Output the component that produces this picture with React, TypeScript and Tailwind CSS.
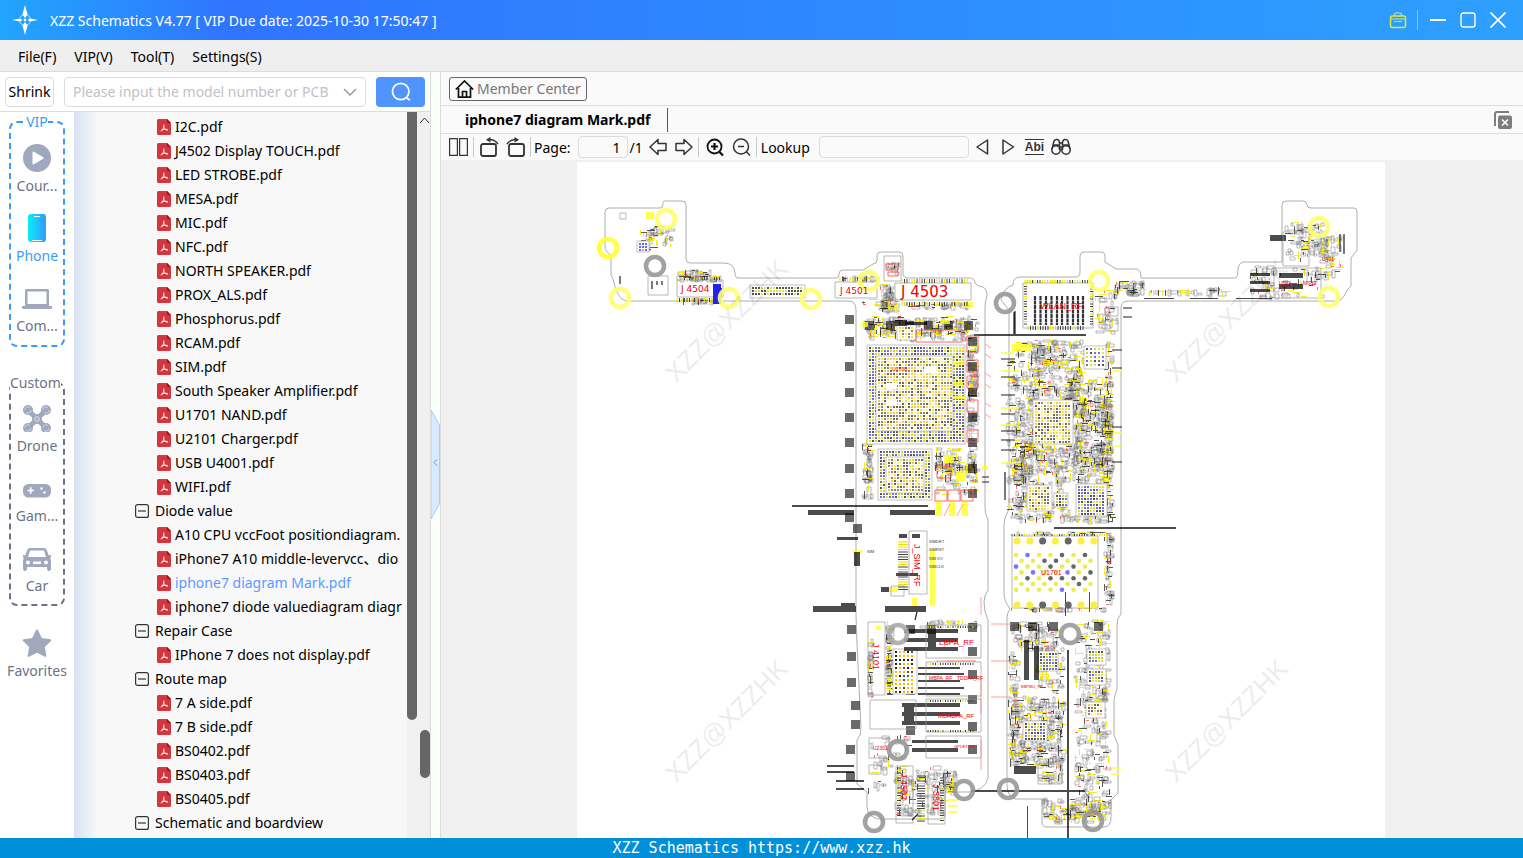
import type { ReactNode } from "react";

const files = [
  "I2C.pdf",
  "J4502 Display TOUCH.pdf",
  "LED STROBE.pdf",
  "MESA.pdf",
  "MIC.pdf",
  "NFC.pdf",
  "NORTH SPEAKER.pdf",
  "PROX_ALS.pdf",
  "Phosphorus.pdf",
  "RCAM.pdf",
  "SIM.pdf",
  "South Speaker Amplifier.pdf",
  "U1701 NAND.pdf",
  "U2101 Charger.pdf",
  "USB U4001.pdf",
  "WIFI.pdf",
];

const folders = [
  {
    name: "Diode value",
    files: [
      "A10 CPU vccFoot positiondiagram.",
      "iPhone7 A10 middle-levervcc、dio",
      "iphone7 diagram Mark.pdf",
      "iphone7 diode valuediagram diagr",
    ],
  },
  { name: "Repair Case", files: ["IPhone 7 does not display.pdf"] },
  { name: "Route map", files: ["7 A side.pdf", "7 B side.pdf", "BS0402.pdf", "BS0403.pdf", "BS0405.pdf"] },
  { name: "Schematic and boardview", files: [] },
];

const selected = "iphone7 diagram Mark.pdf";

function TitleBar() {
  return (
    <header className="flex h-10 shrink-0 items-center bg-linear-to-r from-[#22a5fd] via-[#3074fe] via-15% to-[#2da0ff] pl-3 pr-4 text-white">
      <svg width="26" height="30" viewBox="0 0 26 30">
        <circle cx="13" cy="15" r="5.5" fill="none" stroke="#fff" strokeWidth="1" strokeDasharray="5 3.6" strokeDashoffset="-1.8" opacity=".7" />
        <path d="M13 0l2.600 9.500L13 13l-2.600-3.500zM13 30l2.600-9.500L13 17l-2.600 3.500zM0 15l8-1.500 2.500 1.500L8 16.500zM26 15l-8-1.500-2.500 1.500 2.500 1.500z" fill="#fff" />
        <circle cx="13" cy="15" r="1.400" fill="#fff" />
      </svg>
      <h1 className="ml-3 flex-1">XZZ Schematics V4.77 [ VIP Due date: 2025-10-30 17:50:47 ]</h1>
      <button aria-label="Toolbox">
        <svg width="18" height="18" viewBox="0 0 18 18" fill="none" stroke="#e3e34a" strokeWidth="1.5">
          <rect x="1.5" y="5" width="15" height="11.5" rx="2" />
          <path d="M5.5 5V3.500a1.500 1.500 0 0 1 1.500-1.500h4a1.500 1.500 0 0 1 1.500 1.500V5M1.500 8h15M5 10.500h8" strokeWidth="1.2" />
        </svg>
      </button>
      <span className="ml-2.5 mr-3 h-5 w-px bg-white/40" />
      <button aria-label="Minimize" className="mr-3.5">
        <svg width="16" height="16" viewBox="0 0 16 16" stroke="#fff" strokeWidth="2"><path d="M0 8h16" /></svg>
      </button>
      <button aria-label="Maximize" className="mr-3.5">
        <svg width="16" height="16" viewBox="0 0 16 16" fill="none" stroke="#fff" strokeWidth="1.4"><rect x="1" y="1" width="14" height="14" rx="2.5" /></svg>
      </button>
      <button aria-label="Close" className="mr-px">
        <svg width="16" height="16" viewBox="0 0 16 16" stroke="#fff" strokeWidth="1.7"><path d="M.5.5l15 15M15.5.5l-15 15" /></svg>
      </button>
    </header>
  );
}

function MenuBar() {
  return (
    <nav className="flex h-8 shrink-0 items-center gap-[18px] border-b border-[#dcdcdc] bg-[#efefef] pl-[18px] pt-px">
      <button>File(F)</button>
      <button>VIP(V)</button>
      <button>Tool(T)</button>
      <button>Settings(S)</button>
    </nav>
  );
}

function SearchRow() {
  return (
    <div className="flex h-10 shrink-0 items-center border-b border-[#dcdcdc] px-[5px]">
      <button className="h-[30px] w-[49px] rounded border border-[#dcdcdc]">Shrink</button>
      <div className="ml-2.5 flex h-[30px] flex-1 items-center rounded border border-[#dcdcdc] px-2">
        <input aria-label="Model number" placeholder="Please input the model number or PCB" className="w-0 flex-1 outline-none placeholder:text-[#bfc2c8]" />
        <button aria-label="Show list" className="ml-2">
          <svg width="14" height="14" viewBox="0 0 14 14" fill="none" stroke="#9a9a9a" strokeWidth="1.5"><path d="M1 4l6 6 6-6" /></svg>
        </button>
      </div>
      <button aria-label="Search" className="ml-2.5 flex h-[30px] w-[49px] items-center justify-center rounded-sm bg-[#5094ff]">
        <svg width="20" height="20" viewBox="0 0 20 20" fill="none" stroke="#fff" strokeWidth="1.7"><circle cx="9.7" cy="9.5" r="8.2" /><path d="M15.5 15.3l3.300 3" /></svg>
      </button>
    </div>
  );
}

function SideItem({ label, active, children }: { label: string; active?: boolean; children: ReactNode }) {
  return (
    <button className={`flex h-[70px] w-full flex-col items-center pt-2.5 leading-5 ${active ? "text-[#3b9bfb]" : "text-[#6b7285]"}`}>
      <svg width="32" height="28" viewBox="0 0 32 28" fill="#9fa8bd">{children}</svg>
      <span className="mt-1">{label}</span>
    </button>
  );
}

function SideBar() {
  return (
    <aside className="w-[74px] shrink-0 bg-white">
      <fieldset className="mx-[9px] rounded-lg border-2 border-dashed border-[#3b9bfb] pb-px pt-0.5">
        <legend className="mx-auto leading-5 text-[#3b9bfb]">VIP</legend>
        <SideItem label="Cour...">
          <circle cx="16" cy="14" r="14" />
          <path d="M11.500 8.500q0-1.500 1.400-.8l9.300 5.500q1 .8 0 1.600l-9.300 5.500q-1.400.7-1.400-.8z" fill="#fff" />
        </SideItem>
        <SideItem label="Phone" active>
          <defs>
            <linearGradient id="phone">
              <stop offset="0" stopColor="#06eefb" />
              <stop offset="1" stopColor="#3599fd" />
            </linearGradient>
          </defs>
          <rect x="7" y="0" width="18" height="28" rx="3" fill="url(#phone)" />
          <path d="M13 2.500h6M11 26.500h10" stroke="#fff" />
        </SideItem>
        <SideItem label="Com...">
          <path d="M5.500 5h21a1.500 1.500 0 0 1 1.500 1.500V22H4V6.500A1.500 1.500 0 0 1 5.500 5zM6.500 7.500V20h19V7.500z" fillRule="evenodd" />
          <path d="M1 22h30v1.500q0 1.500-1.500 1.500h-27Q1 25 1 23.500z" />
        </SideItem>
      </fieldset>
      <fieldset className="mx-[9px] mt-[26px] rounded-lg border-2 border-dashed border-[#6b7285] pt-px">
        <legend className="-mx-px leading-5 text-[#6b7285]">Custom</legend>
        <SideItem label="Drone">
          <path d="M7 6l18 18M25 6L7 24" stroke="#9fa8bd" strokeWidth="5" />
          <circle cx="16" cy="15" r="5" />
          <circle cx="16" cy="15" r="2.300" fill="none" stroke="#e3e6ee" />
          {[7, 25].map((cx) =>
            [6, 24].map((cy) => (
              <g key={`${cx}-${cy}`}>
                <circle cx={cx} cy={cy} r="5" />
                <circle cx={cx} cy={cy} r="3.200" fill="none" stroke="#e3e6ee" strokeWidth=".7" strokeDasharray="7 3" />
              </g>
            )),
          )}
        </SideItem>
        <SideItem label="Gam...">
          <rect x="2" y="10" width="28" height="13.5" rx="5.500" />
          <path d="M6.500 16.500h6.500M9.700 13.300v6.500" stroke="#fff" strokeWidth="1.700" />
          <circle cx="20.500" cy="14.500" r="1.200" fill="#fff" />
          <circle cx="23.500" cy="18.500" r="1.200" fill="#fff" />
        </SideItem>
        <SideItem label="Car">
          <path d="M9 4h14q2 0 2.800 2l2 5.500 2.200-.5v2.500l-1 .5q1 1.200 1 3V25q0 2-2 2t-2-2v-2H6v2q0 2-2 2t-2-2v-8q0-1.800 1-3l-1-.5V11l2.200.5L6.200 6Q7 4 9 4zm0 2.500L7 13h18l-2-6.500zM7 16.500a2 2 0 1 0 0 4 2 2 0 0 0 0-4zm18 0a2 2 0 1 0 0 4 2 2 0 0 0 0-4zM12 17.500V20h8v-2.500z" fillRule="evenodd" />
        </SideItem>
      </fieldset>
      <div className="mt-[13px]">
        <SideItem label="Favorites">
          <path d="M16 1.500l4.200 8.500 9 1.300-6.500 6.500 1.700 9L16 22.500l-8.400 4.300 1.700-9-6.500-6.500 9-1.300z" stroke="#9fa8bd" strokeLinejoin="round" strokeWidth="2" />
        </SideItem>
      </div>
    </aside>
  );
}

function PdfRow({ name }: { name: string }) {
  return (
    <li className="h-6">
      <a href="#" className={`flex items-center gap-1 pl-[83px] leading-6 whitespace-nowrap ${name === selected ? "text-[#5b9aff]" : ""}`}>
        <svg width="14" height="16" viewBox="0 0 14 16" className="shrink-0">
          <path d="M1.500 0H10l4 4v10.500q0 1.500-1.500 1.500h-11Q0 16 0 14.500v-13Q0 0 1.500 0z" fill="#d2373f" />
          <path d="M10 0l4 4h-3q-1 0-1-1z" fill="#8e1620" />
          <path d="M6.800 5.500c.6 2-.6 5-3 6.800M7 8.500c.8 1.800 2 2.600 4 2.500M4 11.500c2-1.200 4-1.500 6.500-1" fill="none" stroke="#fff" strokeWidth=".9" />
        </svg>
        {name}
      </a>
    </li>
  );
}

function Tree() {
  return (
    <div className="flex w-0 flex-1">
      <div className="flex-1 overflow-hidden bg-linear-to-r from-[#d9e2f2] to-[#f8f8f8] to-[24px] pt-[3px]">
        <ul>
          {files.map((name) => (
            <PdfRow key={name} name={name} />
          ))}
          {folders.map((folder) => (
            <li key={folder.name}>
              <button className="flex h-6 items-center gap-1.5 pl-[61px] leading-6">
                <svg width="14" height="14" viewBox="0 0 14 14" fill="none" stroke="#333" strokeWidth="1.2">
                  <rect x=".6" y=".6" width="12.8" height="12.8" rx="2" />
                  <path d="M3 7h8" />
                </svg>
                {folder.name}
              </button>
              <ul>
                {folder.files.map((name) => (
                  <PdfRow key={name} name={name} />
                ))}
              </ul>
            </li>
          ))}
        </ul>
      </div>
      <div className="w-2.5 bg-[#f0f0f0] pb-[118px]">
        <div className="h-full rounded-b-full bg-[#666]" />
      </div>
      <div className="flex w-[13px] flex-col items-end bg-[#f0f0f0] pb-[60px]">
        <svg width="11" height="16" viewBox="0 0 11 16" fill="none" stroke="#333"><path d="M1 11l4.500-5 4.500 5" /></svg>
        <div className="mt-auto h-12 w-2.5 rounded-full bg-[#666]" />
      </div>
    </div>
  );
}

function Tool({ label, width, children }: { label: string; width: number; children: ReactNode }) {
  return (
    <button aria-label={label}>
      <svg width={width} height="20" viewBox={`0 0 ${width} 20`} fill="none" stroke="#333" strokeWidth="1.5" strokeLinejoin="round">
        {children}
      </svg>
    </button>
  );
}

function Divider() {
  return <span className="mx-[5px] h-5 w-px shrink-0 bg-[#c8c8c8]" />;
}

function ToolBar() {
  return (
    <div className="flex h-[26px] shrink-0 items-center bg-[#fafafa] pl-2">
      <Tool label="Two pages" width={19}>
        <path d="M.6 1.600h7.800v16.800H.6zM10.600 1.600h7.800v16.800h-7.800z" strokeWidth="1.2" />
      </Tool>
      <Divider />
      <Tool label="Rotate left" width={20}>
        <rect x="2" y="7" width="15" height="12" rx="2" strokeWidth="1.8" />
        <path d="M8 2.800q7-1.200 11 4.200" />
        <path d="M11.500 0v5.600L7 2.800z" fill="#333" stroke="none" />
      </Tool>
      <span className="w-[7px]" />
      <Tool label="Rotate right" width={19}>
        <rect x="3" y="7" width="15" height="12" rx="2" strokeWidth="1.8" />
        <path d="M12 2.800Q5 1.600 1 7" />
        <path d="M8.500 0v5.600L13 2.800z" fill="#333" stroke="none" />
      </Tool>
      <Divider />
      <label htmlFor="page" className="-ml-0.5">Page:</label>
      <input id="page" defaultValue="1" className="ml-[7px] h-[22px] w-[50px] rounded-sm border border-[#dcdcdc] pr-1.5 text-right outline-none" />
      <span className="ml-0.5 mr-1.5">/1</span>
      <Tool label="Previous page" width={18}>
        <path d="M1 10l8-7.500v4h8v7H9v4z" />
      </Tool>
      <span className="w-2" />
      <Tool label="Next page" width={18}>
        <path d="M17 10L9 2.500v4H1v7h8v4z" />
      </Tool>
      <Divider />
      <span className="w-0.5" />
      <Tool label="Zoom in" width={18}>
        <circle cx="8.500" cy="9.500" r="7" stroke="#111" strokeWidth="1.8" />
        <path d="M13.500 15l3.500 3.500M5 9.500h7M8.500 6v7" stroke="#111" strokeWidth="2.2" />
      </Tool>
      <span className="w-2" />
      <Tool label="Zoom out" width={19}>
        <circle cx="9" cy="9.500" r="7.500" />
        <path d="M14.500 15l3.500 3.500M6 9.500h6" />
      </Tool>
      <Divider />
      <label htmlFor="lookup" className="-ml-px">Lookup</label>
      <input id="lookup" className="ml-[9px] h-[22px] w-[150px] rounded-sm border border-[#dcdcdc] outline-none" />
      <span className="w-1.5" />
      <Tool label="Find previous" width={14}>
        <path d="M12.500 3v14L2 10z" />
      </Tool>
      <span className="w-3" />
      <Tool label="Find next" width={14}>
        <path d="M2 3v14l10.500-7z" />
      </Tool>
      <button aria-label="Whole word" className="ml-2.5 h-4 border-y border-[#333] font-['Liberation_Sans'] text-[12px] font-bold leading-3 text-[#333]">Abi</button>
      <span className="w-[7px]" />
      <Tool label="Find in file" width={20}>
        <circle cx="5" cy="13" r="4.200" />
        <circle cx="15" cy="13" r="4.200" />
        <path d="M1 12L3 4q1-2 3.500-1.500Q8 3 8.500 5v8M19 12l-2-8q-1-2-3.500-1.500Q12 3 11.500 5v8M8.500 6h3M8.500 10h3M2 8h6M12 8h6" />
      </Tool>
    </div>
  );
}

// small seeded generator so the board looks the same on every load
function makeRandom(seed: number) {
  let s = seed;
  return () => {
    s = (s * 1664525 + 1013904223) % 4294967296;
    return s / 4294967296;
  };
}

type Area = { x: number; y: number; w: number; h: number; seed?: number };

// ball grid of a chip
function Balls({ x, y, w, h, step, colors, seed = 1 }: Area & { step: number; colors: string[] }) {
  const random = makeRandom(seed);
  const paths: Record<string, string> = {};
  for (let py = y + 1; py < y + h - 1; py += step) {
    for (let px = x + 1; px < x + w - 1; px += step) {
      const color = colors[Math.floor(random() * colors.length)];
      paths[color] = (paths[color] ?? "") + `M${px} ${py}h2v2h-2z`;
    }
  }
  return (
    <g>
      <rect x={x - 1} y={y - 1} width={w + 2} height={h + 2} fill="#fff" stroke="#aaa" strokeWidth=".7" />
      {Object.entries(paths).map(([color, d]) => (
        <path key={color} d={d} fill={color} />
      ))}
    </g>
  );
}

// area packed with small resistors, capacitors and net names
function Parts({ x, y, w, h, n, seed = 1 }: Area & { n: number }) {
  const random = makeRandom(seed * 7919);
  let outline = "";
  let yellow = "";
  let black = "";
  let red = "";
  for (let i = 0; i < n; i++) {
    const flat = random() > 0.45;
    const a = 3 + Math.floor(random() * 6);
    const b = 2 + Math.floor(random() * 3);
    const pw = Math.min(flat ? a : b, w);
    const ph = Math.min(flat ? b : a, h);
    const px = Math.round(x + random() * (w - pw));
    const py = Math.round(y + random() * (h - ph));
    const kind = random();
    const box = `M${px} ${py}h${pw}v${ph}h${-pw}z`;
    if (kind < 0.5) outline += box;
    else if (kind < 0.78) yellow += `M${px} ${py}h${flat ? pw + 1 : 1}v${flat ? 1 : ph}h${flat ? -pw - 1 : -1}z`;
    else if (kind < 0.94) black += `M${px} ${py}h${flat ? pw : 1}v${flat ? 1 : ph}h${flat ? -pw : -1}z`;
    else red += `M${px} ${py}h${flat ? 3 : 1}v${flat ? 1 : 3}h${flat ? -3 : -1}z`;
  }
  return (
    <g>
      <path d={outline} fill="none" stroke="#555" strokeWidth=".5" opacity=".8" />
      <path d={yellow} fill="#f6e600" opacity=".85" />
      <path d={black} fill="#222" opacity=".75" />
      <path d={red} fill="#f33" opacity=".7" />
    </g>
  );
}

// row of pins beside a connector
function Pins({ x, y, w, h, seed = 1 }: Area) {
  const random = makeRandom(seed * 31);
  const across = w > h;
  let dark = "";
  let yellow = "";
  for (let p = 0; p < (across ? w : h); p += 2.5) {
    const d = across ? `M${x + p} ${y}v${h}` : `M${x} ${y + p}h${w}`;
    if (random() > 0.4) dark += d;
    else yellow += d;
  }
  return (
    <g>
      <path d={dark} stroke="#444" />
      <path d={yellow} stroke="#e8e000" />
    </g>
  );
}

// x, y, width, height, number of parts
const parts = [
  [640, 228, 18, 24, 24], [648, 226, 28, 22, 26], [676, 270, 36, 10, 34], [676, 276, 48, 6, 20], [678, 298, 46, 7, 20],
  [840, 276, 38, 6, 20], [862, 298, 40, 14, 30], [880, 284, 14, 30, 36], [904, 302, 66, 8, 30], [864, 316, 115, 20, 150],
  [866, 328, 100, 14, 60], [967, 334, 12, 150, 100], [862, 440, 12, 60, 50], [934, 446, 30, 30, 60], [936, 460, 44, 36, 60],
  [868, 622, 5, 76, 30], [886, 620, 8, 78, 60], [912, 620, 66, 8, 20], [868, 735, 44, 60, 50], [894, 765, 56, 52, 100],
  [943, 770, 14, 26, 40], [886, 262, 14, 14, 12], [1094, 290, 24, 44, 46], [1114, 280, 32, 16, 50], [1144, 290, 60, 6, 24],
  [1206, 286, 24, 12, 14], [1250, 266, 30, 34, 40], [1284, 222, 44, 40, 90], [1280, 266, 44, 34, 40], [1318, 236, 28, 46, 50],
  [1014, 340, 26, 170, 180], [1030, 340, 56, 60, 220], [1064, 376, 50, 60, 180], [1028, 400, 16, 50, 40], [1073, 400, 40, 70, 140],
  [1010, 440, 104, 44, 300], [1010, 480, 60, 40, 90], [1008, 514, 108, 10, 60], [1104, 340, 10, 180, 110], [1010, 532, 100, 3, 24],
  [1104, 532, 10, 76, 60], [1010, 608, 100, 4, 34], [1010, 622, 50, 30, 80], [1036, 646, 30, 50, 60], [1008, 650, 12, 120, 60],
  [1010, 696, 56, 72, 300], [1074, 620, 38, 190, 300], [1042, 798, 68, 26, 120], [1038, 764, 26, 20, 30], [1006, 352, 14, 160, 50],
];

const rings = [
  [608, 248, "#ffff30"], [666, 219, "#ffff70"], [620, 298, "#ffff70"], [729, 298, "#ffff70"], [811, 299, "#ffff70"],
  [869, 281, "#ffff70"], [655, 266, "#999999"], [1005, 303, "#999999"], [1099, 281, "#ffff70"], [1319, 227, "#ffff70"],
  [1329, 297, "#ffff70"], [898, 634, "#aaaaaa"], [1070, 634, "#999999"], [898, 750, "#999999"], [964, 790, "#999999"],
  [1008, 789, "#999999"], [874, 822, "#999999"], [1093, 821, "#999999"],
] as const;

const squares = [
  [849, 319], [849, 341], [849, 366], [849, 392], [849, 417], [849, 442], [849, 468], [849, 493], [849, 517], [857, 528],
  [851, 629], [851, 656], [851, 682], [855, 705], [855, 724], [850, 749], [850, 776],
  [972, 341], [972, 366], [972, 392], [972, 417], [972, 442], [972, 468], [972, 493], [869, 325], [890, 325], [909, 325],
  [928, 325], [948, 325], [968, 325], [910, 629], [931, 629], [972, 627], [972, 651], [972, 674], [972, 699], [972, 726], [972, 749],
  [1014, 626], [1032, 626], [1053, 626], [1098, 626], [910, 663], [910, 690], [910, 730],
];

// dark net bars: x, y, width, height
const bars = [
  [792, 505, 136, 2], [808, 510, 46, 5], [890, 510, 45, 5], [813, 606, 43, 6], [885, 606, 41, 6], [841, 603, 14, 6],
  [974, 334, 112, 2], [1054, 527, 122, 2], [971, 790, 114, 2], [1067, 650, 2, 188], [1027, 806, 1, 32], [827, 765, 27, 2],
  [827, 771, 27, 2], [836, 780, 28, 2], [836, 788, 28, 2], [837, 537, 21, 3], [854, 552, 6, 14], [1270, 235, 16, 6],
  [1279, 273, 24, 5], [1279, 284, 24, 5], [1250, 273, 20, 3], [1250, 281, 20, 3], [1250, 289, 20, 3], [1014, 766, 22, 8],
  [904, 629, 54, 4], [904, 638, 54, 4], [904, 647, 54, 4], [918, 667, 42, 2], [918, 673, 46, 2], [918, 680, 42, 2], [918, 687, 46, 2], [918, 693, 42, 2],
  [902, 703, 58, 4], [902, 712, 58, 4], [902, 721, 58, 4], [904, 703, 10, 22], [912, 740, 46, 3], [912, 748, 46, 4], [912, 629, 14, 3], [928, 631, 8, 20],
  [1024, 640, 5, 40], [1034, 646, 5, 34], [1065, 592, 1, 24], [1089, 592, 1, 20], [895, 320, 12, 6], [905, 322, 22, 3],
  [1144, 298, 30, 1], [1190, 298, 28, 1], [1236, 298, 36, 1], [896, 573, 22, 3], [881, 587, 8, 5], [899, 534, 8, 4], [912, 534, 8, 4],
];

// nand pads, row by row
const pads: [number, number, string][] = [];
const padRandom = makeRandom(17);
for (let row = 0; row < 7; row++) {
  for (let col = 0; col < 7; col++) {
    const r = padRandom();
    pads.push([1016 + col * 11.5 + (row % 2) * 5.5, 555 + row * 5.8, r > 0.75 ? "#7474ff" : r > 0.5 ? "#666" : "#ecec50"]);
  }
}

const warm = ["#f0e04a", "#f7c94a", "#666", "#fff3a0", "#8a8a70"];
const mixed = ["#cfd03c", "#555", "#7070f0", "#dfe04c", "#777"];

function Board() {
  return (
    <svg viewBox="577 162 808 676" className="mx-auto w-[808px] shrink-0 bg-white" role="img" aria-label="iphone7 diagram">
      <g fill="none" stroke="#999" strokeWidth=".8">
        <path d="M605 212q0-4 4-4h51q3 0 3-4t3-3h16q4 0 4 4v54q0 4 4 4h34q10 0 11 10 0 5 3 5h98q3 0 3-4t4-4h20l10-6q4 0 4-4v-5q0-3 4-3h18q4 0 4 4v18q0 4 6 4h60q6 0 6 5 1 3 8 4 4 2 4 9-2 5-2 12v200q0 6 3 12v70q-4 6-4 12 0 10 4 18v158q-3 12-18 14h-25v22q0 5-5 5h-60q-12-1-13-12v-15l-10-8v-44q4-4 4-12l-2-42q-3-60-3-76V310q0-9-7-9H626q-9-2-13-22l-2-4v-20q-6-3-6-9z" />
        <path d="M1001 300q2-12 12-15 0-8 7-8h56q4 0 4-5v-16q0-4 4-4h17q4 0 4 4v6l11 7h20q5 0 5 9h94q3 0 3-9 1-7 6-7h38v-57q0-4 4-4h17q4 0 4 4 0 3 4 3h43q3 0 3 4v38l-6 8v28l-4 4q-4 11-10 11h-209q-7 0-7 7v306q-4 4-4 10v65l-3 10v36l4 10v48l-7 7v17q0 10-7 10h-57q-5 0-5-5v-23h-27q-8-3-8-14V618q0-5 3-9-6-8-6-14v-70q0-8 5-16V310z" />
      </g>

      {parts.map(([x, y, w, h, n], i) => (
        <Parts key={i} x={x} y={y} w={w} h={h} n={n} seed={i + 3} />
      ))}

      <g fill="#000" opacity=".58">
        {squares.map(([x, y]) => (
          <rect key={`${x}-${y}`} x={x - 4} y={y - 4} width="9" height="9" />
        ))}
      </g>

      <Balls x={868} y={346} w={96} h={97} step={3} seed={4} colors={mixed} />
      <Balls x={877} y={357} w={75} h={73} step={3} seed={9} colors={warm} />
      <path d="M924 366h12v6h-12zM886 383h11v6h-11zM886 400h11v6h-11z" fill="#fff" />
      <Balls x={879} y={450} w={52} h={49} step={3} seed={6} colors={mixed} />
      <Balls x={887} y={458} w={36} h={34} step={3} seed={7} colors={warm} />
      <Balls x={751} y={286} w={53} h={11} step={3} seed={8} colors={["#555", "#555", "#dfe04c"]} />
      <Balls x={1085} y={347} w={20} h={21} step={4} seed={2} colors={mixed} />
      <Balls x={1034} y={401} w={38} h={42} step={3} seed={3} colors={warm} />
      <Balls x={1028} y={486} w={23} h={24} step={3} seed={5} colors={warm} />
      <Balls x={1077} y={485} w={29} h={30} step={3} seed={12} colors={["#7070f0", "#dfe04c", "#555"]} />
      <Balls x={1055} y={494} w={12} h={12} step={3} seed={13} colors={mixed} />
      <Balls x={894} y={650} w={22} h={43} step={4} seed={14} colors={["#222", "#fb0", "#555"]} />
      <Balls x={1039} y={652} w={18} h={18} step={3} seed={15} colors={mixed} />
      <Balls x={1024} y={722} w={22} h={18} step={3} seed={16} colors={mixed} />
      <Balls x={1088} y={650} w={17} h={14} step={3} seed={18} colors={mixed} />
      <Balls x={1088} y={670} w={17} h={14} step={3} seed={19} colors={mixed} />
      <Balls x={1087} y={703} w={17} h={14} step={3} seed={20} colors={warm} />
      <Balls x={638} y={242} w={10} h={9} step={3} seed={21} colors={["#6666ff", "#d9a"]} />
      <Balls x={898} y={326} w={17} h={13} step={3} seed={22} colors={warm} />

      <g fill="#ffff20" opacity=".8">
        <path d="M936 502h6v14h-6zM949 502h6v14h-6zM962 502h6v14h-6zM930 550h5v56h-5zM853 550h9v4h-9zM889 587h8v5h-8zM912 598h5v7h-5zM646 212h8v7h-8zM963 302h10v6h-10z" />
        <path d="M953 362h10v3h-10zM953 382h10v3h-10zM953 396h12v3h-12zM940 320h10v4h-10zM862 322h6v5h-6zM1012 344h20v7h-20zM944 455h10v8h-10zM956 471h10v10h-10zM982 466h6v4h-6zM1026 280h8v3h-8zM1050 280h8v3h-8zM876 626h5v4h-5z" />
      </g>

      <g fill="#000" opacity=".7">
        {bars.map(([x, y, w, h], i) => (
          <rect key={i} x={x} y={y} width={w} height={h} />
        ))}
      </g>

      <path
        d="M677 280h46v17h-46zM648 276h20v19h-20zM835 282h42v16h-42zM895 283h76v17h-76zM884 256h17v25h-17zM620 213h6v6h-6zM1023 283h70v45h-70zM1012 536h86v72h-86zM909 531h18v63h-18zM891 586h13v10h-13zM926 625h55v33h-55zM926 662h55v34h-55zM926 699h55v33h-55zM926 736h55v22h-55zM868 622h17v73h-17zM870 700h46v29h-46zM869 738h20v20h-20zM869 765h12v9h-12zM896 766h17v57h-17zM928 774h17v50h-17zM1274 268h47v30h-47zM1283 232h26v34h-26zM1105 307h13v9h-13zM1105 320h13v11h-13zM1038 764h24v20h-24z"
        fill="none"
        stroke="#999"
        strokeWidth=".7"
      />

      <Pins x={677} y={277} w={44} h={3} />
      <Pins x={677} y={298} w={44} h={4} seed={2} />
      <Pins x={840} y={277} w={26} h={4} seed={3} />
      <Pins x={902} y={279} w={66} h={4} seed={4} />
      <Pins x={902} y={302} w={66} h={4} seed={5} />
      <Pins x={1025} y={280} w={66} h={3} seed={6} />
      <Pins x={1028} y={326} w={56} h={4} seed={7} />
      <Pins x={1024} y={284} w={3} h={42} seed={8} />
      <Pins x={1090} y={284} w={3} h={42} seed={9} />
      <Pins x={898} y={542} w={10} h={48} seed={10} />
      <Pins x={928} y={626} w={46} h={2} seed={11} />
      <Pins x={928} y={663} w={46} h={2} seed={12} />
      <Pins x={928} y={700} w={46} h={2} seed={13} />
      <Pins x={928} y={730} w={46} h={2} seed={14} />
      <Pins x={887} y={636} w={4} h={60} seed={15} />
      <Pins x={897} y={768} w={4} h={50} seed={16} />
      <Pins x={917} y={776} w={8} h={46} seed={17} />
      <Pins x={940} y={778} w={4} h={44} seed={18} />
      <Pins x={1012} y={534} w={96} h={2} seed={19} />

      <path d="M1035 296v29M1040.500 296v29M1046 296v29M1051.500 296v29M1057 296v29M1062 296v29M1067.500 296v29M1073 296v29M1078 296v29M1083 296v29" stroke="#333" strokeWidth="2.2" strokeDasharray="4 .5" />
      <path d="M1001 359h14M1001 377h14M1001 395h14M1001 414h14M1001 431h14M1001 440h14M1001 450h14M1112 350h10M1112 368h10M1112 427h10M1112 462h10M1123 308h9M1123 317h9M982 477h7M982 482h7M1014 312v22M1015 311v23M1005 472v28M1340 234v18M1344 234v20M620 276v8M917 612l-2 8M912 820l6-6M652 281v8M657 281v4M662 281v4" stroke="#222" strokeWidth="1.2" fill="none" />
      <path d="M1001 353h12M1001 371h18M1001 408h18M1001 425h14M1001 463h14M1113 433h9M1113 446h8M1113 371h9M948 800h10M948 806h10M948 812h10M1111 768h10M1111 774h8" stroke="#ffff30" strokeWidth="1.5" />
      <path d="M985 344l6 4M985 354l6 4M985 373l6 4M985 384l6 4M985 403l6 4M985 414l6 4M991 624h20M991 661h20M991 697h20M981 597v18M981 678v36M981 740v30M946 661h30M950 504l-6 12M963 504l-6 12M936 661h40" stroke="#f88" strokeWidth=".8" />
      <path d="M967 336h11v16h-11zM967 360h11v12h-11zM967 376h11v12h-11zM967 400h11v12h-11zM967 430h11v12h-11zM935 490h12v11h-12zM948 490h12v11h-12zM961 490h12v11h-12zM916 330h46v12h-46zM937 466h14v12h-14zM886 264h12v6h-12zM888 272h10v4h-10z" fill="none" stroke="#f55" strokeWidth=".9" />

      {pads.map(([x, y, color], i) => (
        <circle key={i} cx={x} cy={y} r="2.3" fill={color} />
      ))}
      {[0, 1, 2, 3, 4, 5, 6].map((i) => (
        <g key={i} fill={i === 2 || i === 4 ? "#666" : "#ffee40"}>
          <circle cx={1017 + i * 12.8} cy="541" r="3.5" />
          <circle cx={1017 + i * 12.8} cy="605" r="3.5" />
        </g>
      ))}
      <path d="M713 284h8v20h-8zM720 288h2v10h-2z" fill="#2222ee" />

      <g fill="none" strokeWidth="4.6" opacity=".9">
        {rings.map(([x, y, color]) => (
          <circle key={`${x}-${y}`} cx={x} cy={y} r="9" stroke={color} />
        ))}
      </g>

      <g fill="#f00000" fontFamily="DejaVu Sans, sans-serif">
        <text x="681" y="292" fontSize="9">J 4504</text>
        <text x="840" y="294" fontSize="9">J 4501</text>
        <text x="901" y="297" fontSize="15">J 4503</text>
      </g>
      <g fill="#f00000" fontFamily="Liberation Sans, sans-serif">
        <text x="1040" y="309" fontSize="9">WLAN_RF</text>
        <text x="1041" y="575" fontSize="7">U1701</text>
        <text x="939" y="645" fontSize="8">LBPA_RF</text>
        <text x="929" y="680" fontSize="5">MBPA_RF</text>
        <text x="957" y="680" fontSize="5">TDDPA_RF</text>
        <text x="938" y="718" fontSize="6">MBHBPA_RF</text>
        <text x="954" y="748" fontSize="4">GPDET_RF</text>
        <text x="873" y="750" fontSize="5">U2301</text>
        <text x="892" y="371" fontSize="5">U0700</text>
        <text x="1021" y="688" fontSize="4">BBPMU_RF</text>
        <text x="1279" y="285" fontSize="5">U503</text>
        <text x="1303" y="285" fontSize="5">MG12</text>
        <text x="1322" y="261" fontSize="5">U401</text>
        <text fontSize="9" transform="translate(873 643) rotate(90)">J 4101</text>
        <text fontSize="9" transform="translate(901 773) rotate(90)">J 4502</text>
        <text fontSize="9" transform="translate(933 784) rotate(90)">J 3801</text>
        <text fontSize="9" transform="translate(914 544) rotate(90)">J_SIM_RF</text>
      </g>
      <g fill="#333" fontFamily="Liberation Sans, sans-serif" fontSize="4">
        <text x="929" y="543">SIMDET</text>
        <text x="929" y="551">SIMRST</text>
        <text x="929" y="560">SIM I/O</text>
        <text x="929" y="568">SIMCLK</text>
        <text x="867" y="553">SIM</text>
      </g>

      <g fill="#000" opacity=".08" fontFamily="Liberation Sans, sans-serif" fontSize="26">
        <text transform="translate(676 384) rotate(-45)">XZZ@XZZHK</text>
        <text transform="translate(1176 384) rotate(-45)">XZZ@XZZHK</text>
        <text transform="translate(676 784) rotate(-45)">XZZ@XZZHK</text>
        <text transform="translate(1176 784) rotate(-45)">XZZ@XZZHK</text>
      </g>
    </svg>
  );
}

function Viewer() {
  return (
    <main className="flex w-0 flex-1 flex-col border-l border-[#dcdcdc]">
      <div className="flex h-[34px] shrink-0 items-center border-b border-[#dcdcdc] bg-[#fafafa] pl-2">
        <button className="flex h-6 items-center gap-[3px] rounded-[3px] border border-[#666] px-[5px] text-[#777]">
          <svg width="19" height="18" viewBox="0 0 19 18" fill="none" stroke="#111" strokeWidth="1.7">
            <path d="M.8 9.500L9.500 1l8.700 8.500M3.500 8v9.200h12V8M7.500 17v-5.500h4V17" />
          </svg>
          Member Center
        </button>
      </div>
      <div className="flex h-7 shrink-0 items-center border-b border-[#dcdcdc] bg-[#fafafa] pl-6 pr-[11px]">
        <button className="h-6 border-r border-[#555] pr-4 font-bold">iphone7 diagram Mark.pdf</button>
        <button aria-label="Close all" className="ml-auto">
          <svg width="18" height="18" viewBox="0 0 18 18">
            <path d="M1 15V3q0-2 2-2h12" fill="none" stroke="#7d7d7d" strokeWidth="2" />
            <rect x="4" y="4.500" width="14" height="13.500" rx="2" fill="#7d7d7d" />
            <path d="M8 8.500l6 6M14 8.500l-6 6" stroke="#fff" strokeWidth="1.6" />
          </svg>
        </button>
      </div>
      <ToolBar />
      <div className="flex min-h-0 flex-1 flex-col overflow-hidden bg-[#f0f0f0] pr-0.5 pt-0.5">
        <Board />
      </div>
    </main>
  );
}

export default function App() {
  return (
    <div className="flex h-screen flex-col overflow-hidden bg-white font-['Noto_Sans','Noto_Sans_CJK_SC',sans-serif] text-[14px] text-black">
      <TitleBar />
      <MenuBar />
      <div className="flex min-h-0 flex-1">
        <section className="flex w-[431px] shrink-0 flex-col border-r border-[#dcdcdc]">
          <SearchRow />
          <div className="flex min-h-0 flex-1">
            <SideBar />
            <Tree />
          </div>
        </section>
        <div className="w-[9px] shrink-0 bg-[#fafffa] pt-[337px]">
          <button aria-label="Collapse panel" className="block">
            <svg width="9" height="111" viewBox="0 0 9 111">
              <path d="M0 1l8.500 15v79L0 110z" fill="#d8eaff" stroke="#a5cdfa" />
              <path d="M6 50.500l-3 3 3 3" fill="none" stroke="#4b94ee" />
            </svg>
          </button>
        </div>
        <Viewer />
      </div>
      <footer className="h-5 shrink-0 bg-[#0090da] text-center font-['DejaVu_Sans_Mono',monospace] text-[15px] leading-5 text-white">
        XZZ Schematics https://www.xzz.hk
      </footer>
    </div>
  );
}
